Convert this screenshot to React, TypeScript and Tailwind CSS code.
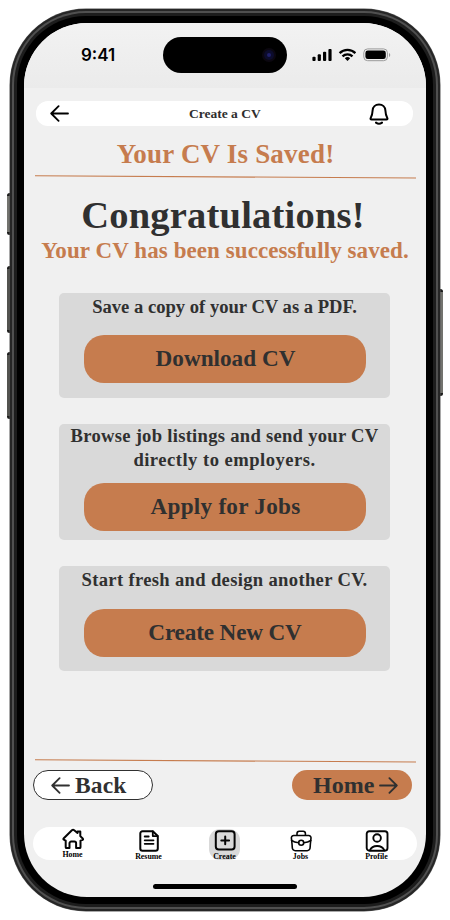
import React from 'react';

const serif = 'font-["Liberation_Serif",serif] font-bold';

function Rule() {
  return (
    <svg className="block" width="381" height="4" viewBox="0 0 381 4">
      <path d="M0 .8L381 3" stroke="#c67c4e" strokeWidth="1.1" />
    </svg>
  );
}

function Arrow({ right = false, color = '#000' }: { right?: boolean; color?: string }) {
  return (
    <svg
      className={right ? 'block rotate-180' : 'block'}
      width="19"
      height="17"
      viewBox="0 0 19 17"
      fill="none"
      stroke={color}
      strokeWidth="1.8"
      strokeLinecap="round"
      strokeLinejoin="round"
    >
      <path d="M18 8.5H1.2M8.6 1.2L1.2 8.5l7.4 7.3" />
    </svg>
  );
}

function StatusBar() {
  return (
    <div className="flex h-[65px] shrink-0 bg-linear-to-b from-[#f2f2f2] to-[#ebebeb]">
      <div className='w-[139px] pt-[20px] pl-[57px] font-["Inter",sans-serif] text-[17px] leading-6 font-semibold text-black'>
        9:41
      </div>
      <div className="mt-[14px] flex h-9 w-[124px] items-center justify-end rounded-full bg-black pr-[11px]">
        <div className="flex size-[14px] items-center justify-center rounded-full bg-[#0b0710]">
          <div className="flex size-[10px] items-center justify-center rounded-full bg-[#0c0c2c]">
            <div className="size-[4px] rounded-full bg-[#20206a]" />
          </div>
        </div>
      </div>
      <svg className="mt-[25px] ml-[25px]" width="80" height="14" viewBox="0 0 80 14">
        <g fill="#000">
          <rect x="0.4" y="8.8" width="3.2" height="4.2" rx="1" />
          <rect x="5.7" y="6.3" width="3.2" height="6.7" rx="1" />
          <rect x="11" y="3.8" width="3.2" height="9.2" rx="1" />
          <rect x="16.4" y="1" width="3.2" height="12" rx="1" />
        </g>
        <g fill="none" stroke="#000" strokeWidth="2.3">
          <path d="M27.6 5.1a11.3 11.3 0 0 1 15.8 0" />
          <path d="M30.5 8.300a7.200 7.200 0 0 1 10 0" />
        </g>
        <path d="M35.5 13l-2.700-2.800a4 4 0 0 1 5.400 0z" fill="#000" />
        <rect x="51.800" y=".9" width="23.600" height="11.800" rx="3.800" fill="none" stroke="#9a9a9a" />
        <rect x="53.400" y="2.500" width="20.400" height="8.600" rx="2.400" fill="#000" />
        <path d="M77 5v4c1.700-.7 1.700-3.300 0-4z" fill="#9a9a9a" />
      </svg>
    </div>
  );
}

function TopBar() {
  return (
    <div className="mt-[13px] ml-[12px] flex h-[25px] w-[377px] shrink-0 items-center rounded-xl bg-white pl-[14px]">
      <Arrow />
      <span className={`${serif} ml-[120px] w-[73px] whitespace-nowrap text-[13.5px] leading-5 text-[#2e2e2e]`}>
        Create a CV
      </span>
      <svg
        className="ml-[107px]"
        width="20"
        height="22"
        viewBox="0 0 20 22"
        fill="none"
        stroke="#000"
        strokeWidth="2"
        strokeLinecap="round"
        strokeLinejoin="round"
      >
        <path d="M10 1.600C6.300 1.600 3.800 4.200 3.600 7.500c-.2 4-.6 5.200-1.800 7.200-.6 1.100-.3 1.700.8 1.700h14.800c1.100 0 1.400-.6.8-1.700-1.200-2-1.600-3.200-1.800-7.200C16.200 4.200 13.700 1.600 10 1.600z" />
        <path d="M7 19.600c1.700 1.300 4.300 1.300 6 0" />
      </svg>
    </div>
  );
}

function ActionCard({
  text,
  label,
  box,
  button,
}: {
  text: React.ReactNode;
  label: string;
  box: string;
  button: string;
}) {
  return (
    <section className={`flex w-[331px] shrink-0 flex-col items-center rounded-[5px] bg-[#d9d9d9] ${box}`}>
      <p className={`${serif} whitespace-nowrap text-center text-[18.6px] leading-6 text-[#303030]`}>{text}</p>
      <button
        className={`${serif} ${button} h-12 w-[282px] rounded-[20px] bg-[#c67c4e] pb-[2px] text-[23.2px] leading-6 text-[#303030]`}
      >
        {label}
      </button>
    </section>
  );
}

function NavItem({
  label,
  active = false,
  raised = false,
  children,
}: {
  label: string;
  active?: boolean;
  raised?: boolean;
  children: React.ReactNode;
}) {
  return (
    <div
      className={`flex w-[31px] flex-col items-center ${
        active ? 'mt-[2px] h-[31px] rounded-[11px] bg-[#d9d9d9]' : raised ? 'h-[33px]' : 'h-[33px] pt-[2px]'
      }`}
    >
      <svg
        className="mt-px block shrink-0"
        width="24"
        height="22"
        viewBox="0 0 24 22"
        fill="none"
        stroke="#050505"
        strokeWidth="2"
        strokeLinecap="round"
        strokeLinejoin="round"
      >
        {children}
      </svg>
      <span className={`${serif} mt-px whitespace-nowrap text-[7.9px] leading-[8px] text-black`}>{label}</span>
    </div>
  );
}

export default function App() {
  return (
    <div className="relative h-[920px] w-[450px] overflow-hidden bg-white pt-[9px] pl-[10px]">
      {/* side buttons */}
      <div className="absolute top-[193px] left-[7px] h-[42px] w-[5px] rounded-sm border-y-[3px] border-[#1d1d1c] bg-[#73736e]" />
      <div className="absolute top-[266px] left-[7px] h-[67px] w-[5px] rounded-sm border-y-[3px] border-[#1d1d1c] bg-[#53534f]" />
      <div className="absolute top-[352px] left-[7px] h-[67px] w-[5px] rounded-sm border-y-[3px] border-[#1d1d1c] bg-[#53534f]" />
      <div className="absolute top-[289px] left-[438px] h-[107px] w-[5px] rounded-sm border-y-[3px] border-[#1d1d1c] bg-[#73736e]" />

      {/* handset: metal rim, black bezel, screen */}
      <div className="relative h-[902px] w-[430px] rounded-[76px] bg-[#262626] p-[2px] shadow-[0_0_0_0.5px_#555]">
        <div className="h-full rounded-[74px] bg-[#505050] p-[2px]">
          <div className="h-full rounded-[72px] bg-[#1d1d1d] p-[3px]">
            <div className="h-full rounded-[69px] bg-black p-[7px]">
              <main className="flex h-[874px] w-[402px] flex-col overflow-hidden rounded-[63px] bg-[#f0f0f0]">
                <StatusBar />
                <TopBar />
                <h1
                  className={`${serif} mt-[14px] ml-px text-center text-[27px] leading-7 tracking-[0.2px] text-[#c67c4e]`}
                >
                  Your CV Is Saved!
                </h1>
                <div className="mt-[7px] ml-[11px]">
                  <Rule />
                </div>
                <h2
                  className={`${serif} mt-[14px] mr-1 text-center text-[38.5px] leading-[44px] tracking-[0.2px] text-[#303030]`}
                >
                  Congratulations!
                </h2>
                <p
                  className={`${serif} whitespace-nowrap text-center text-[23px] leading-7 tracking-[0.08px] text-[#c67c4e]`}
                >
                  Your CV has been successfully saved.
                </p>
                <div className="mt-[28px] ml-[35px] flex flex-col gap-[26px]">
                  <ActionCard
                    text="Save a copy of your CV as a PDF."
                    label="Download CV"
                    box="h-[105px] pt-[2px]"
                    button="mt-[16px] pl-[2px]"
                  />
                  <ActionCard
                    text={
                      <>
                        <span className="tracking-[0.28px]">Browse job listings and send your CV</span>
                        <br />
                        <span className="tracking-[0.48px]">directly to employers.</span>
                      </>
                    }
                    label="Apply for Jobs"
                    box="h-[116px]"
                    button="mt-[11px] pl-[2px] tracking-[0.25px]"
                  />
                  <ActionCard
                    text={<span className="tracking-[0.33px]">Start fresh and design another CV.</span>}
                    label="Create New CV"
                    box="h-[105px] pt-[2px]"
                    button="mt-[17px] pl-px tracking-[-0.15px]"
                  />
                </div>
                <div className="mt-auto ml-[11px]">
                  <Rule />
                </div>
                <div className="mt-[7px] ml-[9px] flex w-[379px] justify-between">
                  <button
                    className={`${serif} flex h-[30px] w-[120px] items-center rounded-full border border-[#303030] bg-white pl-[17px] text-[23.5px] leading-7 text-[#303030]`}
                  >
                    <Arrow color="#303030" />
                    <span className="mb-px ml-[5px] tracking-[0.15px]">Back</span>
                  </button>
                  <button
                    className={`${serif} flex h-[30px] w-[120px] items-center rounded-full bg-[#c67c4e] pl-[21px] text-[24px] leading-7 text-[#303030]`}
                  >
                    <span className="mr-[5px]">Home</span>
                    <Arrow right color="#303030" />
                  </button>
                </div>
                <nav className="mt-[27px] ml-[9px] flex h-[33px] w-[384px] shrink-0 justify-between rounded-full bg-white pr-[25px] pl-[24px]">
                  <NavItem label="Home" raised>
                    <path d="M4.700 12.600v6.600c0 .6.300.9.900.9h2.900v-4.800a1.700 1.700 0 0 1 1.700-1.700h3.200a1.700 1.700 0 0 1 1.700 1.700v4.800h3.500c.6 0 .9-.3.9-.9v-6.600l1.700-.5c.9-.3 1.100-1 .5-1.600l-2.400-2.400V3.600h-2.800v1.500l-3.300-2.800c-.8-.7-1.500-.7-2.300 0l-8.100 7.900c-.7.700-.5 1.400.4 1.700z" />
                  </NavItem>
                  <NavItem label="Resume">
                    <path d="M5.500 1.200h10.300l5 4.700v12.600a2.200 2.200 0 0 1-2.200 2.200H5.500a2.200 2.200 0 0 1-2.200-2.200V3.400a2.200 2.200 0 0 1 2.200-2.200z" />
                    <path d="M15.800 1.500v4.600h4.700M7.700 6.500h4M7.700 10.300h8.800M7.700 13.800h8.800" strokeWidth="1.800" />
                  </NavItem>
                  <NavItem label="Create" active>
                    <rect x="2.800" y="1.200" width="18.800" height="18.300" rx="3" />
                    <path d="M12.200 6.500v7.800M8.300 10.400h7.800" />
                  </NavItem>
                  <NavItem label="Jobs">
                    <g strokeWidth="1.600">
                      <path d="M4.800 5.500h14.800a2.300 2.300 0 0 1 2.400 2.600c-.4 3.500-.7 6-.9 9.500a3 3 0 0 1-3 3.100H6.300a3 3 0 0 1-3-3.100c-.2-3.500-.5-6-.9-9.500a2.300 2.300 0 0 1 2.400-2.600zM8 5.300V3.500A2.300 2.300 0 0 1 10.300 1.200h3.800a2.300 2.300 0 0 1 2.300 2.300v1.800" />
                      <path d="M2.600 10.500c2.400 1.600 4.700 2 7 2.200M21.800 10.500c-2.400 1.600-4.700 2-7 2.200" />
                      <circle cx="12.200" cy="12.800" r="2.500" />
                    </g>
                  </NavItem>
                  <NavItem label="Profile">
                    <g strokeWidth="1.900">
                      <rect x="1.700" y="1.200" width="20.800" height="19.500" rx="2.600" />
                      <circle cx="12.100" cy="8" r="3.800" />
                      <path d="M5 20.200c1.300-3.200 3.400-4.200 7.100-4.200s5.800 1 7.100 4.200" />
                    </g>
                  </NavItem>
                </nav>
                <div className="mt-[24px] mb-[8px] ml-[129px] h-[5px] w-[144px] shrink-0 rounded-full bg-black" />
              </main>
            </div>
          </div>
        </div>
      </div>
    </div>
  );
}
